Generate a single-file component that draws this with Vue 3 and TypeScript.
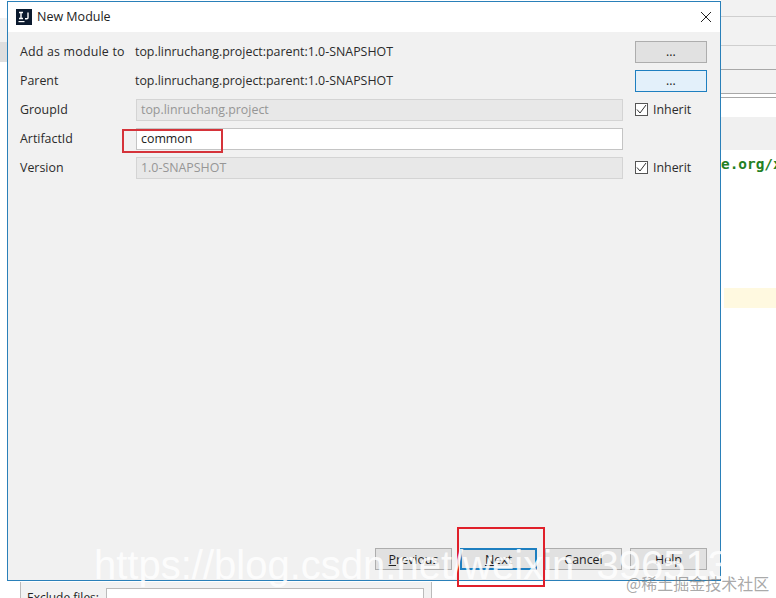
<template>
  <div class="desktop">
    <div class="ide-left"><div class="shade-a"></div><div class="shade-b"></div><div class="shade-c"></div></div>
    <div class="ide-right">
      <div class="line l1"></div>
      <div class="line l2"></div>
      <div class="line l3 dark"></div>
      <div class="line l4 dark"></div>
      <div class="line l5 dark"></div>
      <div class="gray-top"></div>
      <div class="gray-band"></div>
      <div class="code">e.org/x</div>
      <div class="hl"></div>
    </div>
    <div class="ide-bottom">
      <span class="exclude">Exclude files:</span>
      <div class="exclude-input"></div>
    </div>

    <section class="dialog">
      <header class="titlebar">
        <svg class="logo" width="16" height="16" viewBox="0 0 16 16">
          <rect width="16" height="16" fill="#0b1a2e" />
          <rect x="2.5" y="12" width="6" height="1.2" fill="#fff" />
          <path d="M3 3.5h4M5 3.5v6M3 9.5h4M12 3.5v5.2q0 1-1.2 1h-1.8" stroke="#fff" stroke-width="1.4" fill="none" />
        </svg>
        <span class="title">New Module</span>
        <svg class="close" width="12" height="12" viewBox="0 0 12 12">
          <path d="M1 1l10 10M11 1L1 11" stroke="#222" stroke-width="1" fill="none" />
        </svg>
      </header>

      <div class="form">
        <template v-for="row in rows" :key="row.label">
          <label class="lbl">{{ row.label }}</label>
          <div v-if="row.kind === 'text'" class="plain">{{ row.value }}</div>
          <div v-else class="field" :class="{ disabled: row.kind === 'disabled' }">{{ row.value }}</div>
          <button v-if="row.side === 'btn'" class="dots" :class="{ focus: row.focus }">...</button>
          <div v-else-if="row.side === 'inherit'" class="inherit">
            <span class="check">
              <svg width="11" height="11" viewBox="0 0 11 11"><path d="M1 5.5l3 3.5 6-8" stroke="#333" stroke-width="1" fill="none" /></svg>
            </span>
            <span>Inherit</span>
          </div>
          <div v-else></div>
        </template>
      </div>

      <footer class="actions">
        <button class="act"><u>P</u>revious</button>
        <button class="act primary"><u>N</u>ext</button>
        <button class="act">Cancel</button>
        <button class="act">Help</button>
      </footer>
    </section>

    <div class="redbox artifact"></div>
    <div class="redbox next"></div>
    <div class="wm-main">https://blog.csdn.net/weixin_396513</div>
    <div class="wm-small">@稀土掘金技术社区</div>
  </div>
</template>

<script setup lang="ts">
interface Row {
  label: string
  value: string
  kind: 'text' | 'disabled' | 'input'
  side: 'btn' | 'inherit' | 'none'
  focus?: boolean
}
const coords = 'top.linruchang.project:parent:1.0-SNAPSHOT'
const rows: Row[] = [
  { label: 'Add as module to', value: coords, kind: 'text', side: 'btn' },
  { label: 'Parent', value: coords, kind: 'text', side: 'btn', focus: true },
  { label: 'GroupId', value: 'top.linruchang.project', kind: 'disabled', side: 'inherit' },
  { label: 'ArtifactId', value: 'common', kind: 'input', side: 'none' },
  { label: 'Version', value: '1.0-SNAPSHOT', kind: 'disabled', side: 'inherit' }
]
</script>

<style>
html, body { margin: 0; background: #fff; }
</style>

<style scoped>
.desktop {
  position: relative;
  width: 776px;
  height: 598px;
  overflow: hidden;
  background: #fff;
  font-family: "Open Sans", "Noto Sans", sans-serif;
  font-size: 12.4px;
  color: #2b2b2b;
}
.ide-left { position: absolute; left: 0; top: 0; width: 7px; height: 598px; background: #fff; }
.shade-a { height: 18px; }
.shade-b { height: 24px; background: #f2f2f2; }
.shade-c { height: 20px; background: #dedede; }
.ide-right { position: absolute; left: 721px; top: 0; width: 55px; height: 598px; background: #fff; }
.gray-top { position: absolute; left: 0; right: 0; top: 0; height: 93px; background: #f2f2f2; }
.line { position: absolute; left: 0; right: 0; height: 1px; background: #cfcfcf; z-index: 1; }
.line.dark { background: #a8a8a8; }
.l1 { top: 16px; }
.l2 { top: 45px; }
.l3 { top: 69px; }
.l4 { top: 93px; }
.l5 { top: 97px; }
.gray-band { position: absolute; left: 0; right: 0; top: 117px; height: 33px; background: #f0f0f0; }
.code {
  position: absolute;
  left: 0;
  top: 156px;
  font-family: "DejaVu Sans Mono", monospace;
  font-weight: 700;
  font-size: 14.4px;
  color: #238023;
  white-space: nowrap;
}
.hl { position: absolute; left: 3px; right: 0; top: 288px; height: 20px; background: #fff9e0; }
.ide-bottom { position: absolute; left: 20px; top: 582px; width: 410px; height: 16px; border-left: 1px solid #bbb; border-right: 1px solid #bbb; background: #f2f2f2; }
.exclude { position: absolute; left: 6px; top: 7px; color: #222; font-size: 12px; }
.exclude-input { position: absolute; left: 85px; top: 6px; width: 316px; height: 12px; background: #fff; border: 1px solid #bbb; }

.dialog {
  position: absolute;
  left: 7px;
  top: 1px;
  width: 712px;
  height: 578px;
  border: 1px solid #2a80b9;
  background: #f1f1f1;
  display: flex;
  flex-direction: column;
}
.titlebar { height: 30px; background: #fff; display: flex; align-items: center; padding: 0 8px; gap: 5px; flex: none; }
.logo { flex: none; }
.title { font-size: 12.5px; color: #222; flex: 1; position: relative; top: -1px; }
.form {
  display: grid;
  grid-template-columns: 116px 487px 72px;
  grid-auto-rows: 29px;
  padding: 5px 12px 0 12px;
  align-items: center;
  flex: 1;
  align-content: start;
}
.lbl { color: #2b2b2b; }
.lbl:first-child { letter-spacing: 0.2px; }
.plain { color: #2b2b2b; margin-left: -1px; }
.field {
  width: 487px;
  height: 22px;
  box-sizing: border-box;
  border: 1px solid #c4c4c4;
  background: #fff;
  padding-left: 4px;
  line-height: 20px;
  color: #222;
}
.field.disabled { background: #e8e8e8; color: #969696; border-color: #d4d4d4; }
.dots {
  width: 72px;
  height: 22px;
  margin-left: 12px;
  border: 1px solid #adadad;
  background: #e1e1e1;
  font: inherit;
  color: #222;
  padding: 0;
}
.dots.focus { background: #e3f0fa; border-color: #1e7fc0; }
.inherit { display: flex; align-items: center; gap: 5px; margin-left: 12px; }
.check { width: 11px; height: 11px; border: 1px solid #555; background: #fff; display: block; }
.check svg { display: block; }
.actions { display: flex; justify-content: flex-end; gap: 8px; padding: 0 13px 10px 0; flex: none; }
.act {
  width: 77px;
  height: 22px;
  border: 1px solid #adadad;
  background: #e1e1e1;
  font: inherit;
  color: #222;
  padding: 0;
}
.act.primary { border: 2px solid #1e7fc0; }
.redbox { position: absolute; border: 2px solid #e0202a; box-sizing: border-box; }
.artifact { left: 122px; top: 129px; width: 101px; height: 24px; border-color: #d5333a; }
.next { left: 457px; top: 527px; width: 88px; height: 60px; }
.wm-main {
  position: absolute;
  left: 94px;
  top: 542px;
  font-family: "Liberation Sans", sans-serif;
  font-size: 40px;
  line-height: 46px;
  color: rgba(255, 255, 255, 0.85);
  white-space: nowrap;
}
.wm-small {
  position: absolute;
  left: 626px;
  top: 573px;
  font-family: "Noto Sans CJK SC", sans-serif;
  font-size: 16px;
  line-height: 20px;
  color: rgba(120, 120, 120, 0.65);
  white-space: nowrap;
}
</style>
